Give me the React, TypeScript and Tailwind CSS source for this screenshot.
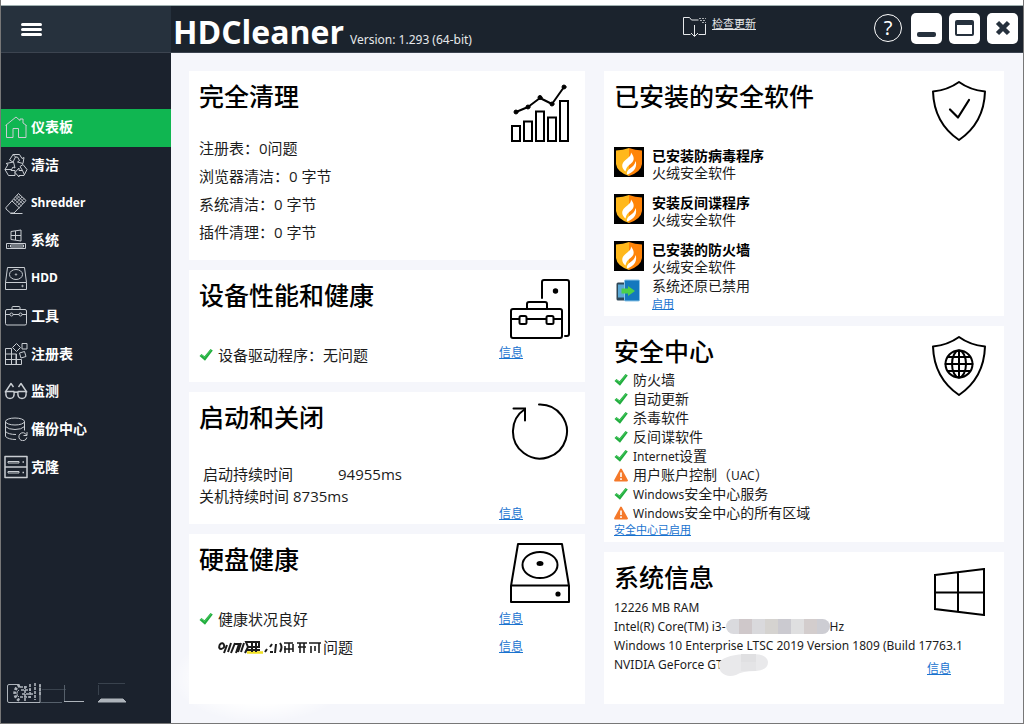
import type { ReactNode } from 'react'

/* ---------- sidebar icons ---------- */

function LineIcon({ children }: { children: ReactNode }) {
  return (
    <svg
      className="w-6 h-6 shrink-0"
      viewBox="0 0 24 24"
      fill="none"
      stroke="currentColor"
      strokeWidth={1}
      strokeLinejoin="round"
      aria-hidden="true"
    >
      {children}
    </svg>
  )
}

const NAV_ITEMS: { label: string; latin?: boolean; icon: ReactNode }[] = [
  {
    label: '仪表板',
    icon: (
      <LineIcon>
        <path d="M1.500 10.500L12 2l4 3.500V4h3v4l3.500 2.500M2.500 10v12.500h6.500v-9h5.500v9h7.500V10" />
      </LineIcon>
    ),
  },
  {
    label: '清洁',
    icon: (
      <LineIcon>
        <path d="M5.500 7L9 1.500h6.500l2.500 4 2-1-1 6-5.500-1.500 2-1.500-2-3.500h-2L9 9z" />
        <path d="M9 1.500l3 3M9.500 9l1.500 6-2-1-2 3.500h4v5H4.500L1 16.500l3-5-2-1z" />
        <path d="M1 16.500h6M19 11.500l4 5-3 6h-5v1.500l-4-4.500 4-4.500v2.500h3.500l-2.500-4zM18.500 17.500l2 4.500" />
      </LineIcon>
    ),
  },
  {
    label: 'Shredder',
    latin: true,
    icon: (
      <LineIcon>
        <path d="M2 16.500L14.500 2.500l7.500 7L10 22H6.500L2 18zM8 10l7.500 7M6.500 22.500h12" />
        <path d="M13 4.500l7.500 7M11.500 6l7.500 7M10 8l7.500 7M20 7.500l-6 6.500M18 6l-6 6.500M16 4.500l-6 6" strokeWidth={0.8} />
      </LineIcon>
    ),
  },
  {
    label: '系统',
    icon: (
      <LineIcon>
        <path d="M7 3.500l10-1.500v11L7 11.500zM11.500 3v9M7 7.500h10M2.500 15.500h19v5h-19zM6.500 17h13v2h-13z" />
        <path d="M4 18h1" />
      </LineIcon>
    ),
  },
  {
    label: 'HDD',
    latin: true,
    icon: (
      <LineIcon>
        <path d="M3.500 1.500h17l2 15v7h-21v-7zM1.500 16.500h21" />
        <ellipse cx="12" cy="8.500" rx="6.500" ry="5" />
        <circle cx="12" cy="8.500" r="0.700" />
        <circle cx="18.500" cy="20" r="0.700" />
      </LineIcon>
    ),
  },
  {
    label: '工具',
    icon: (
      <LineIcon>
        <rect x="1.500" y="5.500" width="21" height="15.500" rx="1.500" />
        <path d="M8 5.500v-2q0-1 1-1h6q1 0 1 1v2M1.500 10.500H6M9 10.500h6M18 10.500h4.500" />
        <circle cx="7.500" cy="10.500" r="1.500" />
        <circle cx="16.500" cy="10.500" r="1.500" />
      </LineIcon>
    ),
  },
  {
    label: '注册表',
    icon: (
      <LineIcon>
        <path d="M1.500 6.500h6v16h-6zM1.500 12h11v10.500M1.500 17.500h16v5h-16zM12 12v10" />
        <path d="M12.500 1.500l4 4-4 4-4-4zM18 1.500h5v5.500h-5zM15.500 11l5-1.500 1.500 5-5 1.500z" />
      </LineIcon>
    ),
  },
  {
    label: '监测',
    icon: (
      <LineIcon>
        <g strokeWidth={1.400}>
          <path d="M2 12.500h8q1 7-4 7t-4-7zM14 12.500h8q1 7-4 7t-4-7z" />
          <path d="M10 13.500q2-1 4 0M1 13.500L7 4.500l2.500 3.500M23 13.500L17 4.500 14.500 8" />
        </g>
      </LineIcon>
    ),
  },
  {
    label: '備份中心',
    icon: (
      <LineIcon>
        <ellipse cx="11" cy="4.500" rx="9.500" ry="3.500" />
        <path d="M1.500 4.500v15q3 3 10.500 3M20.500 4.500v9M1.500 9.500q3 3 9.500 3t9.500-3M1.500 14.500q3 3 10.500 3" />
        <path d="M22.500 18a4 4 0 1 0 .3 2.500M23 15v3.500h-3.500" />
      </LineIcon>
    ),
  },
  {
    label: '克隆',
    icon: (
      <LineIcon>
        <path d="M1 1.500h22v21H1zM1 12h22M18.500 7h1.500M18.500 17.500h1.500" strokeWidth={1.500} />
        <path d="M4 6.500h11v1.500H4zM4 16.500h11v1.500H4z" />
      </LineIcon>
    ),
  },
]

/* ---------- card icons ---------- */

function CardIcon({ children, className = '' }: { children: ReactNode; className?: string }) {
  return (
    <svg
      className={`w-[60px] h-[60px] shrink-0 text-black ${className}`}
      viewBox="0 0 60 60"
      fill="none"
      stroke="currentColor"
      strokeWidth={2}
      strokeLinejoin="round"
      strokeLinecap="round"
      aria-hidden="true"
    >
      {children}
    </svg>
  )
}

function ChartIcon() {
  return (
    <CardIcon className="mt-[3px]">
      <path
        d="M2 43h8v15H2zM14 38.500h8V58h-8zM26 28.500h8V58h-8zM38 34.500h8V58h-8zM50 18h8v40h-8z"
        strokeLinejoin="miter"
      />
      <path d="M6 29l12-5 12-9 12 6L54 4" />
      <g fill="currentColor" strokeWidth={1}>
        <circle cx="6" cy="29" r="2" />
        <circle cx="18" cy="24" r="2" />
        <circle cx="30" cy="14.500" r="2" />
        <circle cx="42" cy="21" r="2" />
        <circle cx="54" cy="4" r="2" />
      </g>
    </CardIcon>
  )
}

function DeviceIcon() {
  return (
    <CardIcon>
      <rect x="1" y="30" width="51" height="29" rx="2" />
      <path d="M17 30v-5q0-2 2-2h16q2 0 2 2v5M1 40h8M17 40h19M44 40h8" />
      <rect x="9.500" y="37" width="7" height="8" rx="1.500" />
      <rect x="36.500" y="37" width="7" height="8" rx="1.500" />
      <path d="M32 19V3q0-2 2-2h23q2 0 2 2v52q0 2-2 2h-2" />
      <circle cx="45.500" cy="12" r="1.700" fill="currentColor" />
    </CardIcon>
  )
}

function RestartIcon() {
  return (
    <CardIcon className="mt-px">
      <path d="M29 2.500A27 27 0 1 1 15 7" />
      <path d="M3.500 6.500H15V18.500" strokeLinejoin="miter" />
    </CardIcon>
  )
}

function DiskIcon() {
  return (
    <CardIcon>
      <path d="M8 1h44l7 42v16H1V43zM1 42.500h58" />
      <ellipse cx="30" cy="22" rx="17.500" ry="13" />
      <ellipse cx="30" cy="20.500" rx="2.500" ry="1.500" fill="currentColor" />
      <circle cx="48" cy="51" r="1.600" fill="currentColor" />
    </CardIcon>
  )
}

const SHIELD = 'M30 1q11 8 26 9.500Q55 42 30 59 5 42 4 10.500 19 9 30 1z'

function ShieldCheckIcon() {
  return (
    <CardIcon className="-mr-1 mt-px">
      <path d={SHIELD} />
      <path d="M21 28.500l8 8L40 19" strokeWidth={2.200} />
    </CardIcon>
  )
}

function ShieldGlobeIcon() {
  return (
    <CardIcon className="-mr-1 mt-px">
      <path d={SHIELD} />
      <circle cx="30" cy="28" r="13.500" />
      <ellipse cx="30" cy="28" rx="7" ry="13.500" />
      <path d="M30 14.500v27M16.500 28h27M19 21h22M19 35h22" />
    </CardIcon>
  )
}

function WindowsIcon() {
  return (
    <svg
      className="w-[52px] h-12 mt-[7px] shrink-0"
      viewBox="0 0 52 48"
      fill="none"
      stroke="#000"
      strokeWidth={2}
      aria-hidden="true"
    >
      <path d="M2 7L51 1v46L2 41zM25 4.500v39M2 24.500h49" />
    </svg>
  )
}

/* ---------- small status pictures ---------- */

function Check() {
  return (
    <svg className="w-[14px] h-[14px] shrink-0" viewBox="0 0 14 14" aria-label="正常">
      <path d="M0.500 8L2.500 6l3 2.300L11.500 1l2.300 1.500L6 12.800z" fill="#22ad3f" />
      <path d="M1.500 8L3 7l2.500 2.500 6.500-7.500" fill="none" stroke="#4fcf66" strokeWidth={0.8} />
    </svg>
  )
}

function Warning() {
  return (
    <svg className="w-[14px] h-[14px] shrink-0" viewBox="0 0 14 14" aria-label="警告">
      <path d="M7 1.500L13 12.500H1z" fill="#f5792a" stroke="#f5792a" strokeWidth={1.800} strokeLinejoin="round" />
      <path d="M7 4.500v4.500M7 10.300v1.700" stroke="#fff" strokeWidth={1.600} />
    </svg>
  )
}

function FireShield() {
  return (
    <svg className="w-[30px] h-[30px] shrink-0" viewBox="0 0 30 30" aria-hidden="true">
      <rect width="30" height="30" fill="#000" />
      <path d="M15 1Q9 3 2 3.500V17q1 8 13 12z" fill="#ffb81c" />
      <path d="M15 1q6 2 13 2.500V17q-1 8-13 12z" fill="#ff8408" />
      <path
        d="M17 5.500c3 4 3.500 7 1.500 9.500-2.500 3-6 4-7 9.500C7.500 21 7 17 11 13.500c4-3.500 6-4.500 6-8z"
        fill="#fff"
      />
      <path d="M21.500 14c2 5-.5 11-8.500 13.500-1.500-6 7.500-6 8.500-13.500z" fill="#fff" />
    </svg>
  )
}

function RestoreIcon() {
  return (
    <svg className="w-6 h-6 mt-0.5 shrink-0" viewBox="0 0 24 24" aria-hidden="true">
      <rect x="0.500" y="3.500" width="11" height="18" rx="1.500" fill="#2f4858" />
      <rect x="2" y="5.500" width="8" height="13" fill="#5aa9d6" />
      <rect x="8.500" y="1" width="15" height="21" rx="1" fill="#1478be" stroke="#8cc3e6" />
      <path d="M5.500 9.500h6.500V7l7 5-7 5v-2.500H5.500z" fill="#4cd04a" />
    </svg>
  )
}

/* ---------- layout pieces ---------- */

function InfoLink({ children = '信息', className = 'text-xs' }: { children?: ReactNode; className?: string }) {
  return (
    <a href="#" className={`text-[#1a73cf] underline whitespace-nowrap ${className}`}>
      {children}
    </a>
  )
}

// Latin words in Chinese rows are set smaller than the text around them
function Latin({ children }: { children: ReactNode }) {
  return <span className="text-xs leading-none">{children}</span>
}

interface CardProps {
  title: string
  icon: ReactNode
  className: string
  children: ReactNode
}

function Card({ title, icon, className, children }: CardProps) {
  return (
    <section className={`bg-white pt-[9px] pl-2.5 ${className}`}>
      <header className="flex justify-between items-start h-8">
        <h2 className="text-[25px] leading-8 font-medium text-black whitespace-nowrap">{title}</h2>
        {icon}
      </header>
      {children}
    </section>
  )
}

const CLEANUP_ROWS = ['注册表：0问题', '浏览器清洁：0 字节', '系统清洁：0 字节', '插件清理：0 字节']

const PROTECTION = [
  { title: '已安装防病毒程序', product: '火绒安全软件' },
  { title: '安装反间谍程序', product: '火绒安全软件' },
  { title: '已安装的防火墙', product: '火绒安全软件' },
]

const SECURITY_ROWS: { id: string; label: ReactNode; ok: boolean }[] = [
  { id: 'firewall', label: '防火墙', ok: true },
  { id: 'updates', label: '自动更新', ok: true },
  { id: 'antivirus', label: '杀毒软件', ok: true },
  { id: 'antispyware', label: '反间谍软件', ok: true },
  { id: 'internet', label: <><Latin>Internet</Latin>设置</>, ok: true },
  { id: 'uac', label: <>用户账户控制（<Latin>UAC</Latin>）</>, ok: false },
  { id: 'service', label: <><Latin>Windows</Latin>安全中心服务</>, ok: true },
  { id: 'areas', label: <><Latin>Windows</Latin>安全中心的所有区域</>, ok: false },
]

function TopBar() {
  return (
    <header className="flex h-[47px] bg-[#1b232d] border-b border-[#3c4450] text-white">
      <div className="w-[170px] shrink-0 bg-[#26313d] flex items-center pl-5">
        <button type="button" aria-label="菜单" className="flex flex-col gap-[2px]">
          <span className="block w-[21px] h-[3px] rounded-full bg-white" />
          <span className="block w-[21px] h-[3px] rounded-full bg-white" />
          <span className="block w-[21px] h-[3px] rounded-full bg-white" />
        </button>
      </div>
      <div className="flex-1 flex justify-between pl-[2px] pr-[5px]">
        <div className="flex items-baseline gap-1.5 w-[510px] whitespace-nowrap">
          <h1 className="text-[32px] leading-[52px] font-bold font-['Open_Sans',sans-serif]">HDCleaner</h1>
          <span className="text-xs text-[#e6e8ea]">Version: 1.293 (64-bit)</span>
        </div>
        <a href="#" className="flex gap-[5px] mr-auto pt-2.5 text-[#e6e8ea] whitespace-nowrap">
          <svg className="w-6 h-[22px]" viewBox="0 0 24 22" fill="none" stroke="currentColor" aria-hidden="true">
            <path d="M7.500 18.500h-7v-17h6l2 2.500h7M15.500 18.500h7V8M11.500 9v11M8 17l3.500 3.500L15 17" />
            <path d="M16 2.500h7M17 4.500h6M19 6.500h4" strokeDasharray="2 1" opacity={0.7} />
          </svg>
          <span className="text-[11px] leading-4 underline">检查更新</span>
        </a>
        <div className="flex items-center gap-[7px] pb-0.5">
          <button
            type="button"
            aria-label="帮助"
            className="w-7 h-7 mr-0.5 rounded-full border border-white flex items-center justify-center text-xl leading-none"
          >
            ?
          </button>
          <button type="button" aria-label="最小化" className="w-[31px] h-[31px] rounded-[5px] bg-white flex items-end justify-center pb-[7px]">
            <span className="block w-[19px] h-[5px] rounded-[2px] bg-[#26313d]" />
          </button>
          <button type="button" aria-label="最大化" className="w-[31px] h-[31px] rounded-[5px] bg-white flex items-center justify-center">
            <span className="block w-[19px] h-4 rounded-[2px] border-2 border-t-[5px] border-[#26313d]" />
          </button>
          <button type="button" aria-label="关闭" className="w-[31px] h-[31px] rounded-[5px] bg-white flex items-center justify-center">
            <svg className="w-4 h-4" viewBox="0 0 16 16" stroke="#26313d" strokeWidth={4.500} aria-hidden="true">
              <path d="M2.500 2.500l11 11M13.500 2.500l-11 11" />
            </svg>
          </button>
        </div>
      </div>
    </header>
  )
}

function Sidebar() {
  return (
    <aside className="w-[170px] shrink-0 bg-[#1b222d] text-white pt-14 flex flex-col justify-between">
      <nav className="grid auto-rows-fr h-[377px]">
        {NAV_ITEMS.map((item, i) => (
          <a
            key={item.label}
            href="#"
            aria-current={i === 0 ? 'page' : undefined}
            className={`flex items-center gap-[3px] pl-[3px] pb-px text-[#c9cdd2] ${i === 0 ? 'bg-[#10b651]' : ''}`}
          >
            {item.icon}
            <span className={`font-bold text-white ${item.latin ? 'text-xs' : 'text-sm'}`}>{item.label}</span>
          </a>
        ))}
      </nav>
      <svg className="w-[128px] h-6 ml-1.5 mb-[18px]" viewBox="0 0 128 24" fill="none" stroke="#aeb4bb" aria-hidden="true">
        <path d="M12 3.500H2q-1.500 0-1.500 1.500v15q0 1.500 1.500 1.500h31V4" />
        <path d="M13 4.500a8 8 0 0 0 0 15" strokeWidth={3} strokeDasharray="2.500 1.500" />
        <path d="M12 9a4 4 0 0 0 0 7" />
        <path d="M13 6h7M14 9h10M15 13h12M13 16h12M18 5v15M23 3v14M28 2v17M33 3v12" strokeWidth={1.600} strokeDasharray="3 1" />
        <path d="M35 8.500h24M91 2.500h27M91.500 4v10" stroke="#39424d" />
        <path d="M33 21.500h22M57.500 4v16" stroke="#56606b" />
        <path d="M57 20.500h20" />
        <path d="M91 21l3-3h22l3 3z" fill="#aeb4bb" />
      </svg>
    </aside>
  )
}

export default function App() {
  return (
    <div className="min-h-screen flex flex-col bg-white border-x border-b border-[#777] text-[#1c1c1c] font-['Noto_Sans','Noto_Sans_CJK_SC',sans-serif]">
      <div className="h-1.5 bg-white border-b border-[#9fb0b0]" />
      <TopBar />
      <div className="flex-1 flex">
        <Sidebar />
        <main className="flex-1 min-w-0 relative isolate grid grid-cols-[396fr_400fr] gap-[19px] bg-[#f5f6fb] pt-[18px] pl-[18px] pr-[19px] pb-[19px]">
          {/* light patch behind the lower left corner */}
          <div className="absolute left-0 bottom-0 -z-10 w-[180px] h-[90px] bg-radial from-white from-40% to-transparent to-70%" />

          <div className="min-w-0 flex flex-col gap-2.5 font-['Open_Sans','Noto_Sans_CJK_SC',sans-serif] text-[15px]">
            <Card title="完全清理" icon={<ChartIcon />} className="pr-[15px] pb-3.5">
              <div className="mt-[22px] leading-7">
                {CLEANUP_ROWS.map((row) => (
                  <p key={row}>{row}</p>
                ))}
              </div>
            </Card>

            <Card title="设备性能和健康" icon={<DeviceIcon />} className="pr-[15px] pb-[13px]">
              <div className="mt-[30px] flex items-center gap-[5px] leading-7">
                <Check />
                <p>设备驱动程序：无问题</p>
                <InfoLink className="text-xs leading-6 ml-auto mr-[47px] self-start" />
              </div>
            </Card>

            <Card title="启动和关闭" icon={<RestartIcon />} className="pr-[15px] pb-[3px]">
              <dl className="mt-[30px] leading-[22px]">
                <div className="flex gap-[45px] pl-1">
                  <dt>启动持续时间</dt>
                  <dd>94955ms</dd>
                </div>
                <div className="flex gap-1">
                  <dt>关机持续时间</dt>
                  <dd>8735ms</dd>
                </div>
              </dl>
              <div className="flex justify-end mr-[47px]">
                <InfoLink className="text-xs leading-[14px]" />
              </div>
            </Card>

            <Card title="硬盘健康" icon={<DiskIcon />} className="flex-1 pr-[15px] pb-5">
              <div className="mt-[30px] flex items-center gap-[5px] leading-7">
                <Check />
                <p>健康状况良好</p>
                <InfoLink className="text-xs leading-7 ml-auto mr-[47px]" />
              </div>
              <div className="flex items-center leading-7 pl-[19px]">
                <svg className="w-[105px] h-4" viewBox="0 0 105 16" fill="none" stroke="#1c1c1c" strokeWidth={2} aria-hidden="true">
                  <path d="M29 13.500h16" stroke="#f0e020" strokeWidth={2.500} />
                  <path d="M2 5q3-2 4 1t-3 4q-3 0-1-5M9 6L6 14M13 4L10 13M17 4l-4 10M17 5h4l-3 9M23 4l-3 9M26 4l-3 9M28 3h13v5H30zM29 11h13M27 14l3-6M34 4v9M38 4v9M47 13l2-3M52 8l2-3M52 13h3M58 5l-1 9M62 4q3 4 0 9" />
                  <path d="M66 4h9M67 7v7M71 4v10M66 10h9M75 5v8M79 4h10M80 8h8M82 4v10M86 4v10M91 4h12M93 7v7M97 7v5M101 4v10" strokeWidth={1.600} />
                </svg>
                <p>问题</p>
                <InfoLink className="text-xs leading-7 ml-auto mr-[47px]" />
              </div>
            </Card>
          </div>

          <div className="min-w-0 flex flex-col gap-2.5 text-xs">
            <Card title="已安装的安全软件" icon={<ShieldCheckIcon />} className="pr-[19px] pb-[3px]">
              <ul className="mt-[35px] flex flex-col gap-[13px] text-sm leading-[17px]">
                {PROTECTION.map((item) => (
                  <li key={item.title} className="flex gap-2">
                    <FireShield />
                    <div>
                      <h3 className="font-bold text-black">{item.title}</h3>
                      <p>{item.product}</p>
                    </div>
                  </li>
                ))}
              </ul>
              <div className="mt-0.5 flex gap-3 pl-0.5">
                <RestoreIcon />
                <div className="flex flex-col items-start leading-[18px]">
                  <p className="text-sm leading-[18px]">系统还原已禁用</p>
                  <InfoLink className="text-[11px] leading-[18px]">启用</InfoLink>
                </div>
              </div>
            </Card>

            <Card title="安全中心" icon={<ShieldGlobeIcon />} className="pr-[19px] pb-1">
              <ul className="mt-[3px] text-sm leading-[19px]">
                {SECURITY_ROWS.map((row) => (
                  <li key={row.id} className="flex items-center gap-[5px] h-[19px]">
                    {row.ok ? <Check /> : <Warning />}
                    <span>{row.label}</span>
                  </li>
                ))}
              </ul>
              <InfoLink className="block text-[11px] leading-4">安全中心已启用</InfoLink>
            </Card>

            <Card title="系统信息" icon={<WindowsIcon />} className="flex-1 pr-[19px] pb-5">
              <div className="mt-[5px] leading-[19px] whitespace-nowrap">
                <p>12226 MB RAM</p>
                <p className="flex items-center">
                  Intel(R) Core(TM) i3-
                  <span className="flex w-[104px] h-[15px] rounded-full overflow-hidden" aria-hidden="true">
                    <span className="flex-1 bg-[#dadade]" />
                    <span className="flex-1 bg-[#cfc8ca]" />
                    <span className="flex-1 bg-[#d9d9dc]" />
                    <span className="flex-1 bg-[#d5d3d0]" />
                    <span className="flex-1 bg-[#cbcad0]" />
                    <span className="flex-1 bg-[#dfdfe0]" />
                    <span className="flex-1 bg-[#d3cdcd]" />
                    <span className="flex-1 bg-[#cdcdd3]" />
                  </span>
                  Hz
                </p>
                <p>Windows 10 Enterprise LTSC 2019 Version 1809 (Build 17763.1</p>
                <div className="flex items-start">
                  <p>NVIDIA GeForce GT</p>
                  <svg className="w-[50px] h-6 -mt-0.5 -ml-1 -mb-1" viewBox="0 0 50 24" aria-hidden="true">
                    <path d="M0 9Q8 1 30 1q18-1 19 8 0 8-12 9-14 0-20 4Q8 25 2 19-1 14 0 9z" fill="#e9e9eb" />
                    <path d="M22 1h15v8H22z" fill="#e0e0e2" />
                    <path d="M22 9h15v9H22z" fill="#e4e4e6" />
                  </svg>
                  <InfoLink className="text-xs leading-4 ml-auto mr-[34px] mt-1.5" />
                </div>
              </div>
            </Card>
          </div>
        </main>
      </div>
    </div>
  )
}
